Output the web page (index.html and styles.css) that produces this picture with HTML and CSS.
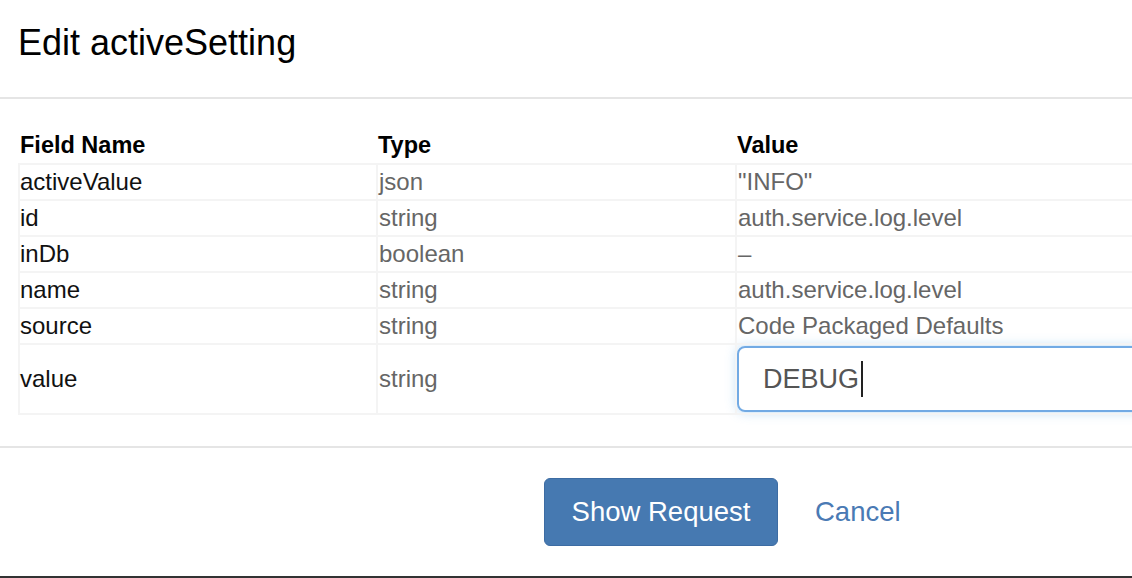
FILE: index.html
```html
<!DOCTYPE html>
<html lang="en">
<head>
<meta charset="utf-8">
<title>Edit activeSetting</title>
<link rel="stylesheet" href="styles.css">
</head>
<body>
<div class="modal">
  <div class="modal-header">
    <h4 class="modal-title">Edit activeSetting</h4>
  </div>
  <div class="modal-body">
    <table class="fields">
      <colgroup>
        <col class="c-name">
        <col class="c-type">
        <col class="c-value">
      </colgroup>
      <thead>
        <tr><th>Field Name</th><th>Type</th><th>Value</th></tr>
      </thead>
      <tbody>
        <tr><td class="name">activeValue</td><td class="muted">json</td><td class="muted">"INFO"</td></tr>
        <tr><td class="name">id</td><td class="muted">string</td><td class="muted">auth.service.log.level</td></tr>
        <tr><td class="name">inDb</td><td class="muted">boolean</td><td class="muted">–</td></tr>
        <tr><td class="name">name</td><td class="muted">string</td><td class="muted">auth.service.log.level</td></tr>
        <tr><td class="name">source</td><td class="muted">string</td><td class="muted">Code Packaged Defaults</td></tr>
        <tr class="edit-row"><td class="name">value</td><td class="muted">string</td><td class="input-cell"><div class="input">DEBUG<span class="caret"></span></div></td></tr>
      </tbody>
    </table>
  </div>
  <div class="modal-footer">
    <button class="btn-primary" type="button">Show Request</button>
    <a class="btn-link" href="#">Cancel</a>
  </div>
</div>
<div class="backdrop-edge"></div>
</body>
</html>
```
FILE: styles.css
```css
html, body {
  margin: 0;
  padding: 0;
  background: #fff;
  overflow: hidden;
}
body {
  width: 1132px;
  height: 578px;
  font-family: "Liberation Sans", Arial, Helvetica, sans-serif;
  color: #000;
  display: flex;
  flex-direction: column;
}
.modal {
  flex: 1;
  width: 1132px;
  overflow: hidden;
}
.modal-header {
  height: 99px;
  box-sizing: border-box;
  padding: 22px 18px 0 18px;
  border-bottom: 2px solid #e5e5e5;
}
.modal-title {
  margin: 0;
  font-size: 36px;
  line-height: 42px;
  font-weight: normal;
}
.modal-body {
  padding: 28px 0 31px 18px;
  border-bottom: 2px solid #e5e5e5;
}
.fields {
  border-collapse: collapse;
  width: 1240px;
  table-layout: fixed;
  font-size: 24px;
}
.c-name { width: 358px; }
.c-type { width: 359px; }
.fields th {
  text-align: left;
  font-weight: bold;
  font-size: 23.5px;
  height: 36px;
  padding: 0 1px;
  vertical-align: middle;
  line-height: 26px;
}
.fields td {
  border: 2px solid #f4f4f4;
  height: 33px;
  padding: 0 1px 1px;
  line-height: 26px;
  vertical-align: middle;
}
.fields td.name { padding-left: 0; color: #111; }
.fields td.muted { color: #666; }
.edit-row td { height: 67px; }
.fields td.input-cell {
  padding: 0;
}
.input {
  height: 62px;
  box-sizing: content-box;
  border: 2px solid #72aae4;
  border-radius: 8px;
  box-shadow: 0 0 12px rgba(102, 175, 233, 0.45);
  padding: 0 24px;
  font-size: 27px;
  line-height: 62px;
  color: #555;
  display: flex;
  align-items: center;
}
.caret {
  display: inline-block;
  width: 2px;
  height: 36px;
  background: #222;
  margin-left: 2px;
}
.modal-footer {
  padding: 30px 0 0 544px;
  display: flex;
  align-items: center;
  gap: 37px;
}
.btn-primary {
  width: 234px;
  height: 68px;
  box-sizing: border-box;
  background: #4679b1;
  border: 1px solid #3d6ca3;
  border-radius: 6px;
  color: #fff;
  font-family: "Liberation Sans", Arial, Helvetica, sans-serif;
  font-size: 27.5px;
  padding: 0;
  cursor: pointer;
}
.btn-link {
  font-size: 27.5px;
  color: #4a7ab4;
  text-decoration: none;
}
.backdrop-edge {
  height: 2px;
  background: #333;
}
```
